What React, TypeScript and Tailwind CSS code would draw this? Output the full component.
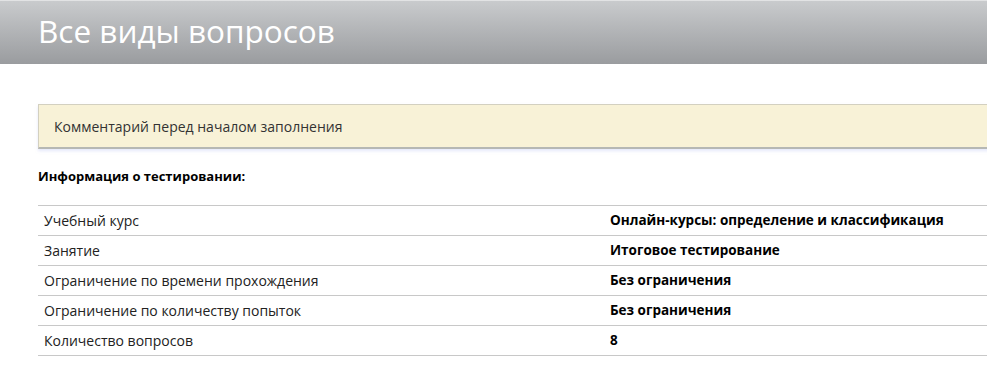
export default function App() {
    const rows = [
        ["Учебный курс", "Онлайн-курсы: определение и классификация"],
        ["Занятие", "Итоговое тестирование"],
        ["Ограничение по времени прохождения", "Без ограничения"],
        ["Ограничение по количеству попыток", "Без ограничения"],
        ["Количество вопросов", "8"],
    ];

    return (
        <div className="w-[987px] h-[370px] bg-white overflow-hidden font-['Open_Sans',sans-serif] text-[#222]">
            <div className="h-[64px] bg-gradient-to-b from-[#c9cbcd] to-[#9a9c9f] border-t border-[#e2e3e4] flex items-center pl-[38px]">
                <h1 className="text-[31.5px] text-white leading-none -mt-[3px]">Все виды вопросов</h1>
            </div>
            <div className="pl-[38px] pt-[40px]">
                <div className="h-[45px] bg-[#f8f2d7] border border-[#d3d0c0] border-b-2 border-b-[#b6b8b4] shadow-[0_2px_3px_rgba(180,190,240,0.35)] flex items-center pl-[15px] -mr-[4px] text-[14px] text-[#333]">
                    Комментарий перед началом заполнения
                </div>
                <h2 className="mt-[18px] text-[13px] font-bold text-black leading-[18px]">Информация о тестировании:</h2>
                <div className="mt-[20px] border-t border-[#c8c8c8]">
                    {rows.map(([label, value]) => (
                        <div key={label} className="h-[30px] border-b border-[#c8c8c8] flex items-center">
                            <div className="w-[572px] pl-[6px] text-[14px] text-[#222]">{label}</div>
                            <div className="text-[13.5px] font-bold text-black">{value}</div>
                        </div>
                    ))}
                </div>
            </div>
        </div>
    );
}
